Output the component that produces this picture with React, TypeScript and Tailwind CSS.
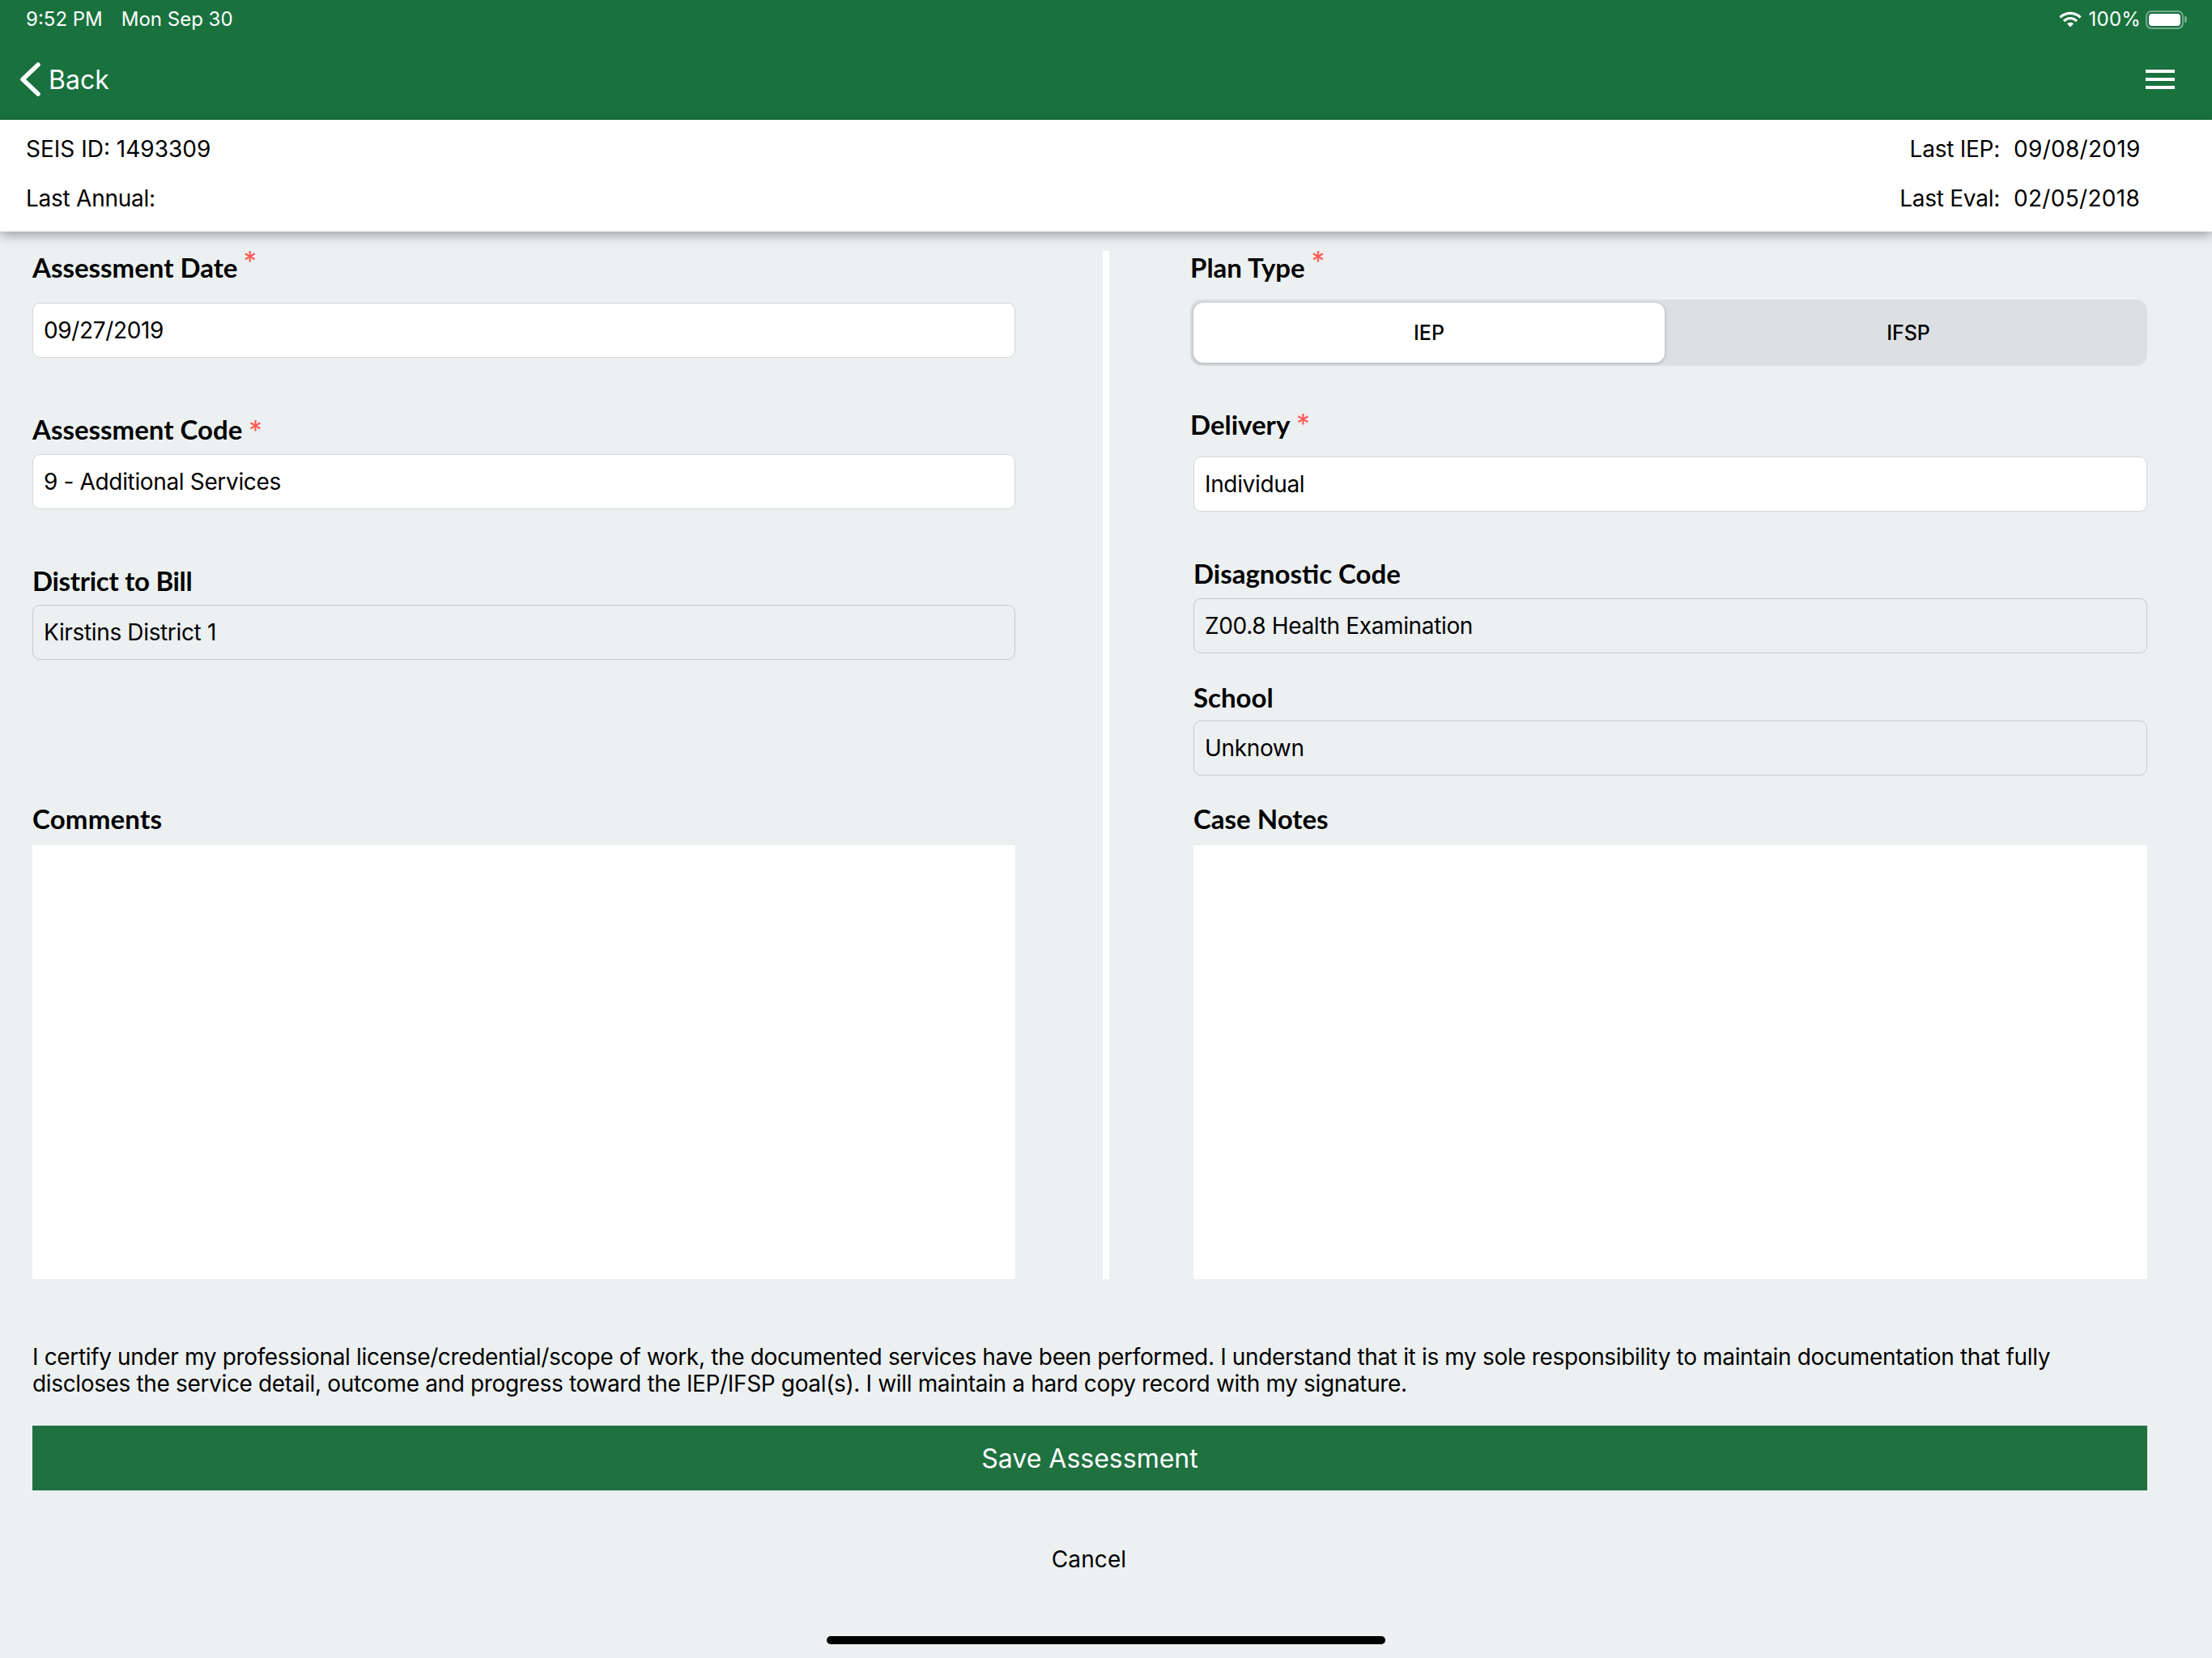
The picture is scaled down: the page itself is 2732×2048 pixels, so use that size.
import React from "react";

const sans = "font-['Inter','Liberation_Sans',sans-serif]";

const Label = ({
  text,
  required,
  className,
  starClass,
}: {
  text: string;
  required?: boolean;
  className: string;
  starClass?: string;
}) => (
  <div className={`h-[40px] pb-[2px] flex items-center font-['Lato',sans-serif] font-bold text-[33px] leading-[38px] text-black ${className}`}>
    <span>{text}</span>
    {required && <span className={`relative font-['Inter',sans-serif] font-normal text-[#ff5b57] text-[33px] leading-[33px] ${starClass}`}>*</span>}
  </div>
);

const Input = ({ value, disabled, className }: { value: string; disabled?: boolean; className: string }) => (
  <div
    className={`h-[68px] rounded-[9px] border-[1.5px] px-[13px] flex items-center text-[28px] tracking-[-0.35px] text-black ${disabled ? "bg-[#ecf0f1] border-[#c6cacd]" : "bg-white border-[#d3d6d8]"} ${className}`}
  >
    {value}
  </div>
);

const Wifi = () => (
  <svg width="28" height="20" viewBox="0 0 28 20" fill="none" stroke="white" strokeWidth="3.2">
    <path d="M1.5 7.5C8.5 .7 19.5 .7 26.5 7.5" />
    <path d="M6 12c5-4.6 11-4.6 16 0" />
    <path d="M14 19.5l-4-4.3c2.4-2 5.6-2 8 0z" fill="white" stroke="none" />
  </svg>
);

const Battery = () => (
  <div className="flex items-center">
    <div className="w-[47px] h-[23px] rounded-[7px] border-2 border-white/40 p-[2px]">
      <div className="w-full h-full rounded-[4px] bg-white" />
    </div>
    <div className="w-[3px] h-[8px] rounded-r-[2px] bg-white/40 ml-[1px]" />
  </div>
);

const App = () => {
  return (
    <div className={`w-[2732px] h-[2048px] overflow-hidden bg-[#ecf0f1] ${sans}`}>
      {/* Top bar */}
      <div className="h-[148px] bg-[#19723e] text-white">
        <div className="h-[48px] pl-[32px] pr-[31px] flex items-center justify-between text-[24px]">
          <div className="flex gap-[23px]">
            <span>9:52 PM</span>
            <span>Mon Sep 30</span>
          </div>
          <div className="flex items-center gap-[6px]">
            <Wifi />
            <span className="ml-[3px] tracking-[0.2px]">100%</span>
            <Battery />
          </div>
        </div>
        <div className="h-[99px] pl-[24px] pr-[46px] flex items-center justify-between">
          <div className="flex items-center gap-[10px] text-[32px]">
            <svg width="26" height="42" viewBox="0 0 26 42" fill="none" stroke="white" strokeWidth="5.5" strokeLinecap="round" strokeLinejoin="round">
              <path d="M23 3L4 21l19 18" />
            </svg>
            <span className="pt-[2px]">Back</span>
          </div>
          <div className="w-[36px] flex flex-col gap-[6px]">
            <div className="h-[4px] bg-white" />
            <div className="h-[4px] bg-white" />
            <div className="h-[4px] bg-white" />
          </div>
        </div>
      </div>

      {/* Student info */}
      <div className="relative z-10 h-[138px] bg-white shadow-[0_4px_14px_rgba(0,0,0,0.35)] pl-[32px] pr-[90px] pt-[16px] pb-[21px] flex justify-between text-[28px] text-black">
        <div className="flex flex-col justify-between leading-[40px]">
          <div>SEIS ID: 1493309</div>
          <div className="tracking-[-0.25px]">Last Annual:</div>
        </div>
        <div className="grid grid-cols-[auto_155px] gap-x-[17px] content-between leading-[40px]">
          <div className="text-right tracking-[-0.25px]">Last IEP:</div>
          <div className="tracking-[0.3px]">09/08/2019</div>
          <div className="text-right tracking-[-0.25px]">Last Eval:</div>
          <div className="tracking-[0.3px]">02/05/2018</div>
        </div>
      </div>

      {/* Form */}
      <div className="flex pl-[40px]">
        <div className="w-[1214px] pt-[25px]">
          <Label text="Assessment Date" required className="gap-[7px]" starClass="-top-[8px]" />
          <Input value="09/27/2019" className="mt-[23px]" />
          <Label text="Assessment Code" required className="mt-[69px] gap-[8px]" starClass="top-[1px]" />
          <Input value="9 - Additional Services" className="mt-[10px]" />
          <Label text="District to Bill" className="mt-[69px] tracking-[-0.3px]" />
          <Input value="Kirstins District 1" disabled className="mt-[9px]" />
          <Label text="Comments" className="mt-[177px] tracking-[0.2px]" />
          <div className="h-[536px] mt-[12px] bg-white" />
        </div>

        <div className="w-[8px] h-[1270px] mt-[24px] ml-[108px] bg-white" />

        <div className="w-[1178px] ml-[104px] pt-[25px]">
          <Label text="Plan Type" required className="-ml-[4px] gap-[8px]" starClass="-top-[8px]" />
          <div className="h-[82px] mt-[19px] -ml-[4px] w-[1182px] rounded-[14px] bg-[#dde0e3] flex pl-[4px] py-[4px] text-[25px] font-medium text-black">
            <div className="w-[582px] pt-[2px] rounded-[12px] bg-white shadow-[0_1px_4px_rgba(0,0,0,0.25)] flex items-center justify-center">IEP</div>
            <div className="flex-1 pt-[2px] pl-[6px] flex items-center justify-center">IFSP</div>
          </div>
          <Label text="Delivery" required className="mt-[53px] -ml-[4px] gap-[8px]" starClass="-top-[1px]" />
          <Input value="Individual" className="mt-[19px]" />
          <Label text="Disagnostic Code" className="mt-[57px]" />
          <Input value="Z00.8 Health Examination" disabled className="mt-[10px]" />
          <Label text="School" className="mt-[35px]" />
          <Input value="Unknown" disabled className="mt-[8px]" />
          <Label text="Case Notes" className="mt-[34px]" />
          <div className="h-[536px] mt-[12px] bg-white" />
        </div>
      </div>

      {/* Certification and actions */}
      <div className="w-[2612px] ml-[40px] mt-[80px]">
        <p className="text-[28px] leading-[33px] tracking-[-0.35px] text-black">
          I certify under my professional license/credential/scope of work, the documented services have been performed. I understand that it is my sole responsibility to maintain documentation that fully
          <br />
          discloses the service detail, outcome and progress toward the IEP/IFSP goal(s). I will maintain a hard copy record with my signature.
        </p>
        <button className="w-full h-[80px] mt-[35px] pt-[2px] bg-[#1f7140] text-white text-[32px]">Save Assessment</button>
        <div className="h-[40px] mt-[64px] pt-[2px] pr-[2px] flex items-center justify-center text-[28px] tracking-[0.1px] text-black">Cancel</div>
      </div>

      <div className="w-[690px] h-[10px] mt-[76px] mx-auto rounded-full bg-black" />
    </div>
  );
};

export default App;
